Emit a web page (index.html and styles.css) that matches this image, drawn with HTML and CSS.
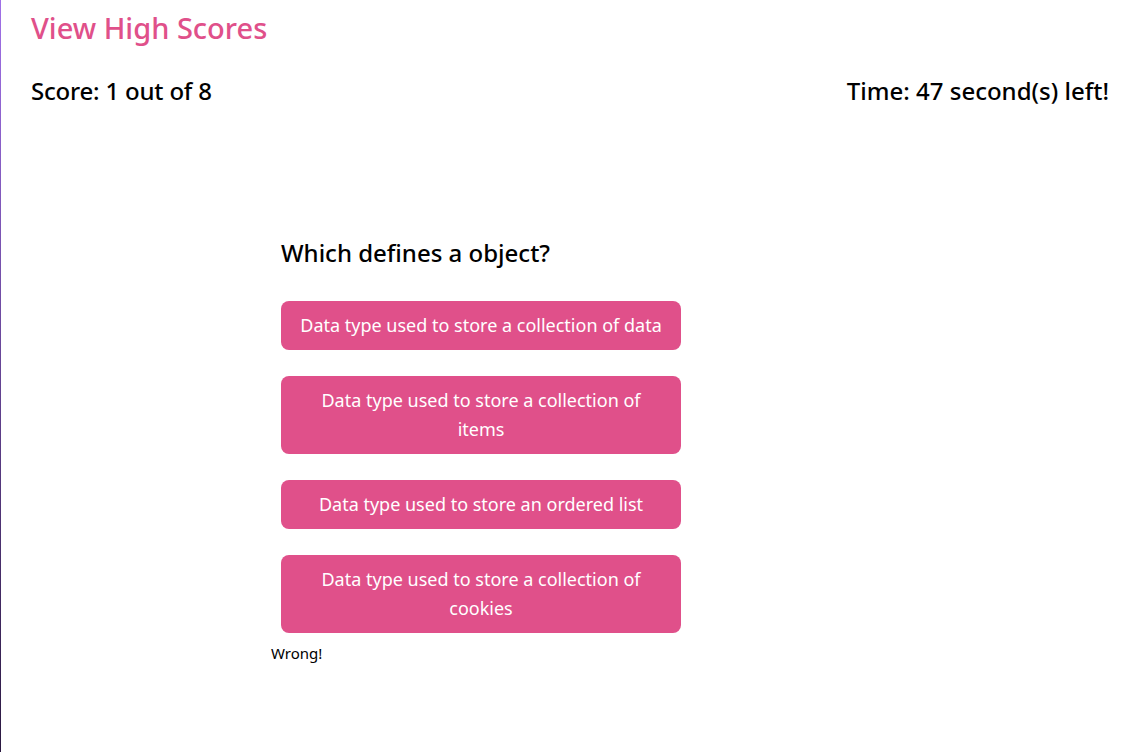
FILE: index.html
```html
<!DOCTYPE html>
<html lang="en">
<head>
<meta charset="utf-8">
<title>Quiz</title>
<link rel="stylesheet" href="styles.css">
</head>
<body>
<div class="page">
  <header class="header">
    <a class="high-scores" href="#">View High Scores</a>
    <div class="status">
      <h2 class="score">Score: 1 out of 8</h2>
      <h2 class="timer">Time: 47 second(s) left!</h2>
    </div>
  </header>
  <main class="quiz">
    <h2 class="question">Which defines a object?</h2>
    <div class="answers">
      <button class="answer">Data type used to store a collection of data</button>
      <button class="answer">Data type used to store a collection of items</button>
      <button class="answer">Data type used to store an ordered list</button>
      <button class="answer">Data type used to store a collection of cookies</button>
    </div>
    <p class="feedback">Wrong!</p>
  </main>
</div>
</body>
</html>
```
FILE: styles.css
```css
html, body {
  margin: 0;
  padding: 0;
  background: #fff;
}
body {
  font-family: "Noto Sans", "Open Sans", sans-serif;
  color: #000;
}
.page {
  min-height: 752px;
  box-sizing: border-box;
  border-left: 1px solid #9a6ae0;
  border-image: linear-gradient(#a070e8, #2a1840) 1;
  border-right: 0;
  border-top: 0;
  border-bottom: 0;
}
.header {
  padding: 8px 32px 0 30px;
}
.high-scores {
  display: block;
  color: #e0508a;
  text-decoration: none;
  font-size: 29px;
  font-weight: 500;
  line-height: 40px;
}
.status {
  display: flex;
  justify-content: space-between;
  margin-top: 23px;
}
.score, .timer {
  margin: 0;
  font-size: 24px;
  font-weight: 500;
  line-height: 40px;
}
.score {
  letter-spacing: -0.2px;
}
.quiz {
  margin: 124px 0 0 270px;
  width: 420px;
}
.question {
  margin: 0 0 0 10px;
  font-size: 24px;
  font-weight: 500;
  line-height: 36px;
}
.answers {
  display: flex;
  flex-direction: column;
  gap: 26px;
  margin: 30px 0 0 10px;
  width: 400px;
}
.answer {
  background: #e0508a;
  color: #fff;
  border: 0;
  border-radius: 8px;
  padding: 10px 18px;
  font-family: inherit;
  font-size: 18px;
  line-height: 29px;
  text-align: center;
  cursor: pointer;
}
.feedback {
  margin: 9px 0 0 0;
  font-size: 15px;
  line-height: 22px;
}
```
